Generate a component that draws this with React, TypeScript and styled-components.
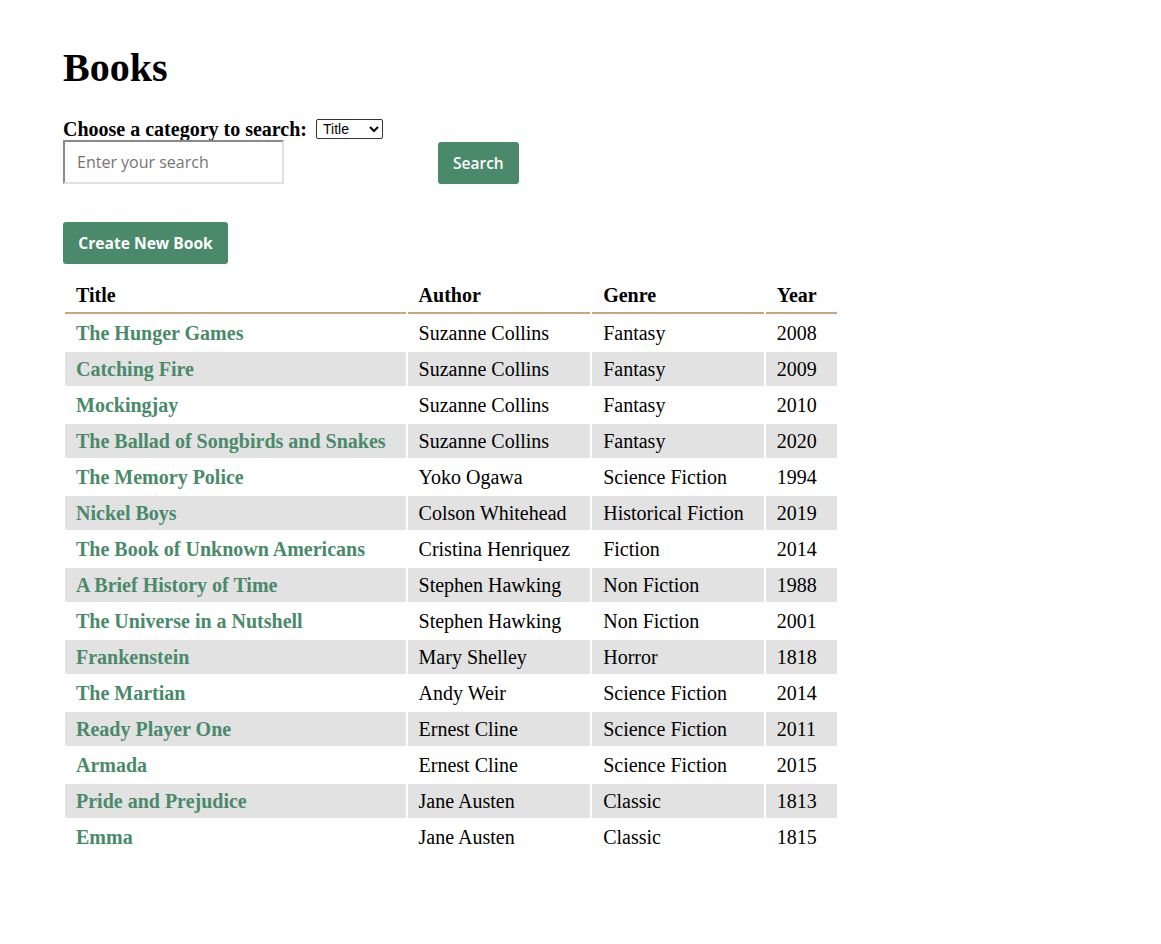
import React from "react";
import styled, { createGlobalStyle } from "styled-components";

const GlobalStyle = createGlobalStyle`
  body {
    margin: 8px;
    background: #ffffff;
    font-family: "Liberation Serif", "Times New Roman", serif;
    color: #000;
  }
`;

const Page = styled.main`
  padding: 0 0 0 55px;
`;

const Heading = styled.h1`
  font-size: 40px;
  font-weight: bold;
  margin: 37px 0 27px;
  line-height: 46px;
`;

const SearchForm = styled.form`
  display: flex;
  flex-direction: column;
  align-items: flex-start;
`;

const LabelRow = styled.div`
  display: flex;
  align-items: center;
  gap: 9px;
`;

const Label = styled.label`
  font-size: 20px;
  font-weight: bold;
  line-height: 22px;
`;

const Select = styled.select`
  font-family: "Liberation Sans", Arial, sans-serif;
  font-size: 14px;
  width: 67px;
  height: 20px;
  padding: 0 2px;
  border: 1px solid #333;
  border-radius: 2px;
  background: #fff;
`;

const InputRow = styled.div`
  display: flex;
  align-items: flex-end;
  gap: 154px;
`;

const SearchInput = styled.input`
  box-sizing: border-box;
  width: 221px;
  height: 44px;
  padding: 0 12px;
  font-family: "Open Sans", sans-serif;
  font-size: 16px;
  border: 2px solid #e0e0e0;
  border-top-color: #8a8a8a;
  border-left-color: #8a8a8a;
  &::placeholder {
    color: #757575;
  }
`;

const GreenButton = styled.button<{ $wide?: boolean }>`
  box-sizing: border-box;
  height: 42px;
  padding: 0 15px;
  min-width: ${(p) => (p.$wide ? "165px" : "80px")};
  background: #4a8a6b;
  color: #fff;
  border: none;
  border-radius: 3px;
  font-family: "Open Sans", sans-serif;
  font-size: ${(p) => (p.$wide ? "15.6px" : "15.5px")};
  font-weight: ${(p) => (p.$wide ? 700 : 600)};
  cursor: pointer;
`;

const CreateWrap = styled.div`
  margin-top: 38px;
  margin-bottom: 12px;
`;

const Table = styled.table`
  border-collapse: separate;
  border-spacing: 2px;
  font-size: 20px;
`;

const Th = styled.th`
  text-align: left;
  font-weight: bold;
  padding: 5px 20px 5px 11px;
  line-height: 24px;
  border-bottom: 2px solid #c4a886;
`;

const Row = styled.tr<{ $striped: boolean }>`
  background: ${(p) => (p.$striped ? "#e2e2e2" : "transparent")};
`;

const Td = styled.td`
  padding: 5px 20px 5px 11px;
  line-height: 24px;
  white-space: nowrap;
`;

const TitleLink = styled.a`
  color: #4a8a6b;
  font-weight: bold;
  text-decoration: none;
`;

const books = [
  ["The Hunger Games", "Suzanne Collins", "Fantasy", "2008"],
  ["Catching Fire", "Suzanne Collins", "Fantasy", "2009"],
  ["Mockingjay", "Suzanne Collins", "Fantasy", "2010"],
  ["The Ballad of Songbirds and Snakes", "Suzanne Collins", "Fantasy", "2020"],
  ["The Memory Police", "Yoko Ogawa", "Science Fiction", "1994"],
  ["Nickel Boys", "Colson Whitehead", "Historical Fiction", "2019"],
  ["The Book of Unknown Americans", "Cristina Henriquez", "Fiction", "2014"],
  ["A Brief History of Time", "Stephen Hawking", "Non Fiction", "1988"],
  ["The Universe in a Nutshell", "Stephen Hawking", "Non Fiction", "2001"],
  ["Frankenstein", "Mary Shelley", "Horror", "1818"],
  ["The Martian", "Andy Weir", "Science Fiction", "2014"],
  ["Ready Player One", "Ernest Cline", "Science Fiction", "2011"],
  ["Armada", "Ernest Cline", "Science Fiction", "2015"],
  ["Pride and Prejudice", "Jane Austen", "Classic", "1813"],
  ["Emma", "Jane Austen", "Classic", "1815"],
];

export default function App() {
  return (
    <>
      <GlobalStyle />
      <Page>
        <Heading>Books</Heading>
        <SearchForm onSubmit={(e) => e.preventDefault()}>
          <LabelRow>
            <Label htmlFor="category">Choose a category to search:</Label>
            <Select id="category" defaultValue="Title">
              <option>Title</option>
              <option>Author</option>
              <option>Genre</option>
              <option>Year</option>
            </Select>
          </LabelRow>
          <InputRow>
            <SearchInput placeholder="Enter your search" />
            <GreenButton type="submit">Search</GreenButton>
          </InputRow>
        </SearchForm>
        <CreateWrap>
          <GreenButton $wide type="button">Create New Book</GreenButton>
        </CreateWrap>
        <Table>
          <thead>
            <tr>
              <Th>Title</Th>
              <Th>Author</Th>
              <Th>Genre</Th>
              <Th>Year</Th>
            </tr>
          </thead>
          <tbody>
            {books.map((b, i) => (
              <Row key={b[0]} $striped={i % 2 === 1}>
                <Td>
                  <TitleLink href="#">{b[0]}</TitleLink>
                </Td>
                <Td>{b[1]}</Td>
                <Td>{b[2]}</Td>
                <Td>{b[3]}</Td>
              </Row>
            ))}
          </tbody>
        </Table>
      </Page>
    </>
  );
}
